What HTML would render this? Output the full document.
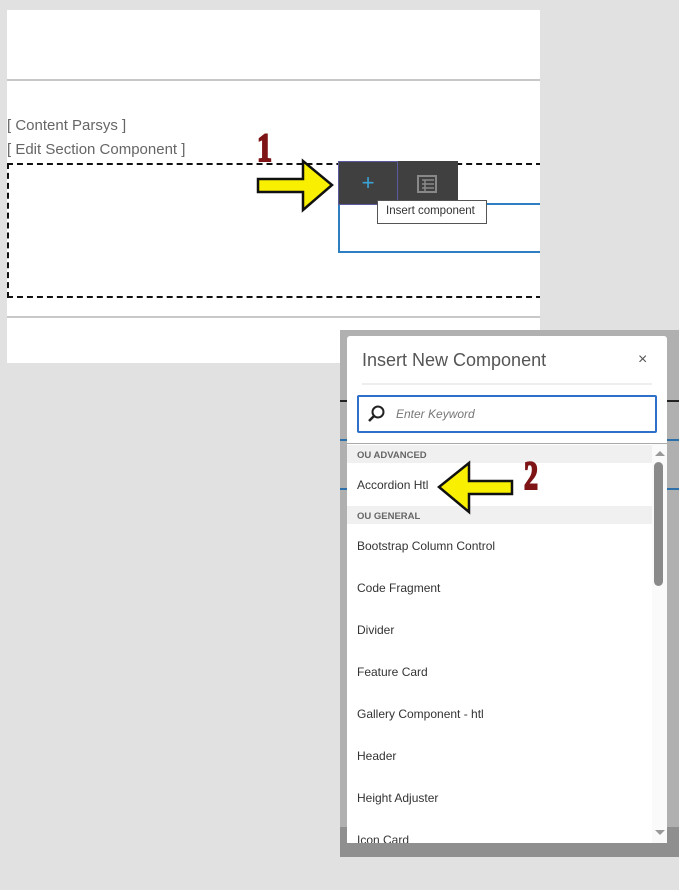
<!DOCTYPE html>
<html><head><style>
*{margin:0;padding:0;box-sizing:border-box}
body{width:679px;height:890px;background:#e1e1e1;position:relative;overflow:hidden;font-family:"Liberation Sans",sans-serif}
.a{position:absolute}
.pt{font-size:15px;color:#555;font-weight:300;white-space:nowrap}
.it{position:absolute;left:10px;font-size:12px;color:#333;white-space:nowrap}
.hd{position:absolute;left:0;width:305px;height:18px;background:#f0f0f0;font-size:9.5px;color:#666;padding:5px 0 0 10px;font-weight:bold}
.num{font-family:'Liberation Serif',serif;font-weight:bold;color:#7e1416;-webkit-text-stroke:2px #7e1416}
</style></head><body>
<div class="a" style="left:7px;top:10px;width:533px;height:353px;background:#fff;overflow:hidden">
<div class="a" style="left:0;top:69px;width:533px;height:2px;background:#c8c8c8"></div>
<div class="a" style="left:0;top:306px;width:533px;height:2px;background:#c8c8c8"></div>
<div class="a" style="left:0;top:153px;width:545px;height:135px;border:2px dashed #111;border-right:none"></div>
<div class="a" style="left:331px;top:193px;width:210px;height:50px;border:2px solid #2d7fc1;border-right:none"></div>
</div>
<div class="a pt" style="left:7px;top:117px;color:#666">[ Content Parsys ]</div>
<div class="a pt" style="left:7px;top:141px;color:#666">[ Edit Section Component ]</div>
<div class="a" style="left:338px;top:161px;width:120px;height:44px;background:#404040"></div>
<div class="a" style="left:338px;top:161px;width:60px;height:44px;border:1px solid #5a5aa0;color:#3ba4d6;font-size:22px;text-align:center;line-height:42px">+</div>
<svg class="a" style="left:417px;top:175px" width="20" height="18"><rect x="1" y="1" width="18" height="16" fill="none" stroke="#888" stroke-width="2"/><path d="M5 5H17M5 9H17M5 13H17M8 5V17" stroke="#888" stroke-width="1.5"/></svg>
<div class="a" style="left:377px;top:200px;width:110px;height:24px;background:#fff;border:1px solid #555;font-size:11.5px;color:#333;padding:4px 0 0 8px;white-space:nowrap">Insert component</div>
<div class="a num" style="left:257px;top:124px;font-size:40px;transform:scaleX(.75);transform-origin:left">1</div>
<svg class="a" style="left:256px;top:158px" width="80" height="56"><polygon points="2,21 47,21 47,3 76,27 47,52 47,34 2,34" fill="#f8f000" stroke="#111" stroke-width="2.5"/></svg>

<div class="a" style="left:340px;top:330px;width:339px;height:497px;background:#b0b0b0"></div>
<div class="a" style="left:340px;top:827px;width:339px;height:30px;background:#8f8f8f"></div>
<div class="a" style="left:340px;top:400px;width:7px;height:2px;background:#222"></div>
<div class="a" style="left:667px;top:400px;width:12px;height:2px;background:#222"></div>
<div class="a" style="left:340px;top:439px;width:7px;height:2px;background:#2d6fa8"></div>
<div class="a" style="left:667px;top:439px;width:12px;height:2px;background:#2d6fa8"></div>
<div class="a" style="left:340px;top:488px;width:7px;height:2px;background:#2d6fa8"></div>
<div class="a" style="left:667px;top:488px;width:12px;height:2px;background:#2d6fa8"></div>
<div class="a" style="left:347px;top:336px;width:320px;height:507px;background:#fff;border-radius:3px 3px 0 0;overflow:hidden">
 <div class="a" style="left:15px;top:14px;font-size:18px;color:#555;white-space:nowrap">Insert New Component</div>
 <div class="a" style="left:291px;top:15px;font-size:16px;color:#555">×</div>
 <div class="a" style="left:15px;top:47px;width:290px;height:2px;background:#eee"></div>
 <div class="a" style="left:10px;top:59px;width:300px;height:38px;border:2px solid #2d6fc9;border-radius:2px"></div>
 <svg class="a" style="left:21px;top:69px" width="18" height="18"><circle cx="10" cy="7" r="5.5" fill="none" stroke="#222" stroke-width="2"/><path d="M6 11L1 16" stroke="#222" stroke-width="2.5"/></svg>
 <div class="a" style="left:49px;top:71px;font-size:12px;color:#777;font-style:italic">Enter Keyword</div>
 <div class="a" style="left:0;top:107px;width:320px;height:1px;background:#aaa"></div>
 <div class="hd" style="top:109px">OU ADVANCED</div>
 <div class="it" style="top:142px">Accordion Htl</div>
 <div class="hd" style="top:170px">OU GENERAL</div>
 <div class="it" style="top:203px">Bootstrap Column Control</div>
 <div class="it" style="top:245px">Code Fragment</div>
 <div class="it" style="top:287px">Divider</div>
 <div class="it" style="top:329px">Feature Card</div>
 <div class="it" style="top:371px">Gallery Component - htl</div>
 <div class="it" style="top:413px">Header</div>
 <div class="it" style="top:455px">Height Adjuster</div>
 <div class="it" style="top:497px">Icon Card</div>
 <div class="a" style="left:305px;top:108px;width:15px;height:400px;background:#fafafa"></div>
 <div class="a" style="left:308px;top:115px;width:0;height:0;border-left:5px solid transparent;border-right:5px solid transparent;border-bottom:5px solid #999"></div>
 <div class="a" style="left:307px;top:126px;width:9px;height:124px;background:#8a8a8a;border-radius:5px"></div>
 <div class="a" style="left:308px;top:494px;width:0;height:0;border-left:5px solid transparent;border-right:5px solid transparent;border-top:5px solid #999"></div>
</div>
<div class="a num" style="left:524px;top:452px;font-size:40px;transform:scaleX(.7);transform-origin:left">2</div>
<svg class="a" style="left:436px;top:460px" width="80" height="56"><polygon points="76,21 33,21 33,3 3,27 33,52 33,34 76,34" fill="#f8f000" stroke="#111" stroke-width="2.5"/></svg>
</body></html>
